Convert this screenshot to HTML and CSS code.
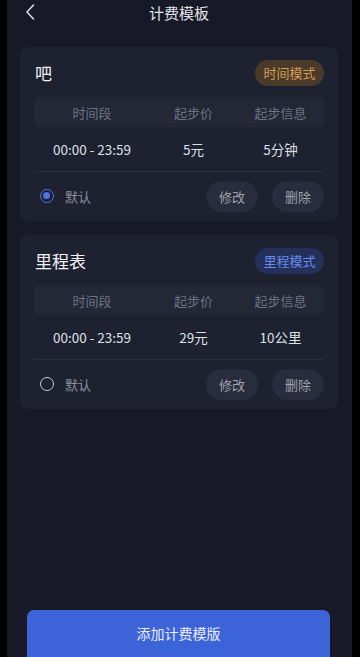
FILE: index.html
```html
<!DOCTYPE html>
<html lang="zh">
<head>
<meta charset="utf-8">
<title>计费模板</title>
<link rel="stylesheet" href="styles.css">
</head>
<body>
<div class="screen">
  <header class="nav">
    <svg class="back" width="12" height="18" viewBox="0 0 12 18"><path d="M9.5 2 L3 9 L9.5 16" fill="none" stroke="#d8dae2" stroke-width="1.6" stroke-linecap="round" stroke-linejoin="round"/></svg>
    <div class="nav-title">计费模板</div>
  </header>

  <section class="card">
    <div class="card-head">
      <div class="card-title">吧</div>
      <div class="badge badge-time">时间模式</div>
    </div>
    <div class="table-head">
      <div class="c1">时间段</div><div class="c2">起步价</div><div class="c3">起步信息</div>
    </div>
    <div class="table-row">
      <div class="c1">00:00 - 23:59</div><div class="c2">5元</div><div class="c3">5分钟</div>
    </div>
    <div class="card-foot">
      <div class="radio-wrap"><span class="radio on"></span><span class="radio-label">默认</span></div>
      <div class="actions"><button class="btn">修改</button><button class="btn">删除</button></div>
    </div>
  </section>

  <section class="card">
    <div class="card-head">
      <div class="card-title">里程表</div>
      <div class="badge badge-mile">里程模式</div>
    </div>
    <div class="table-head">
      <div class="c1">时间段</div><div class="c2">起步价</div><div class="c3">起步信息</div>
    </div>
    <div class="table-row">
      <div class="c1">00:00 - 23:59</div><div class="c2">29元</div><div class="c3">10公里</div>
    </div>
    <div class="card-foot">
      <div class="radio-wrap"><span class="radio"></span><span class="radio-label">默认</span></div>
      <div class="actions"><button class="btn">修改</button><button class="btn">删除</button></div>
    </div>
  </section>

  <div class="spacer"></div>
  <button class="add-btn">添加计费模版</button>
</div>
</body>
</html>
```

FILE: styles.css
```css
* { box-sizing: border-box; }
html, body { margin: 0; padding: 0; height: 100%; }
body {
  background: #000;
  font-family: "Noto Sans CJK SC", "Noto Sans", sans-serif;
  overflow: hidden;
}
.screen {
  margin: 0 8px 0 7px;
  height: 657px;
  background: #171a26;
  display: flex;
  flex-direction: column;
  padding: 0 14px 0 13px;
}
.nav {
  height: 27px;
  display: flex;
  align-items: center;
  justify-content: center;
  position: relative;
  margin-bottom: 20px;
}
.back { position: absolute; left: 4px; top: 3px; }
.nav-title {
  color: #e2e3ea;
  font-size: 15px;
  line-height: 20px;
  margin-top: -1px;
}
.card {
  background: #1e2130;
  border-radius: 8px;
  padding: 12px 14px 1px 14px;
  margin-bottom: 14px;
}
.card-head {
  display: flex;
  justify-content: space-between;
  align-items: center;
  height: 27px;
  margin-bottom: 11px;
}
.card-title {
  color: #f0f1f5;
  font-size: 17px;
  padding-left: 1px;
}
.badge {
  height: 26px;
  width: 69px;
  border-radius: 13px;
  font-size: 13px;
  display: flex;
  align-items: center;
  justify-content: center;
}
.badge-time { background: #4a3a29; color: #d49b52; }
.badge-mile { background: #24305a; color: #6a8bee; }
.table-head, .table-row {
  display: grid;
  grid-template-columns: 116px 87px 87px;
  text-align: center;
  align-items: center;
  font-size: 13px;
}
.table-head {
  height: 30px;
  background: #242736;
  border-radius: 6px;
  color: #6f7282;
}
.table-row {
  height: 45px;
  color: #dfe0e6;
  border-bottom: 1px solid #2b2e3d;
  font-size: 13.5px;
}
.card-foot {
  display: flex;
  justify-content: space-between;
  align-items: center;
  height: 48px;
}
.radio-wrap { display: flex; align-items: center; padding-left: 6px; }
.radio {
  width: 14px;
  height: 14px;
  border-radius: 50%;
  border: 1.5px solid #c8cad3;
  display: inline-block;
  position: relative;
}
.radio.on { border-color: #4e73e6; }
.radio.on::after {
  content: "";
  position: absolute;
  left: 2px; top: 2px;
  width: 7px; height: 7px;
  border-radius: 50%;
  background: #4e73e6;
}
.radio-label { color: #8e909c; font-size: 13px; margin-left: 11px; }
.actions { display: flex; gap: 14px; }
.btn {
  width: 52px;
  height: 31px;
  border: none;
  border-radius: 16px;
  background: #292c3c;
  color: #9fa1ac;
  font-family: inherit;
  font-size: 13px;
  padding: 0;
}
.spacer { flex: 1; }
.add-btn {
  height: 50px;
  margin: 0 8px -3px 7px;
  border: none;
  border-radius: 7px 7px 0 0;
  background: #3d63d9;
  color: #e8ecfb;
  font-family: inherit;
  font-size: 14px;
  padding: 0 0 4px 0;
}
```
